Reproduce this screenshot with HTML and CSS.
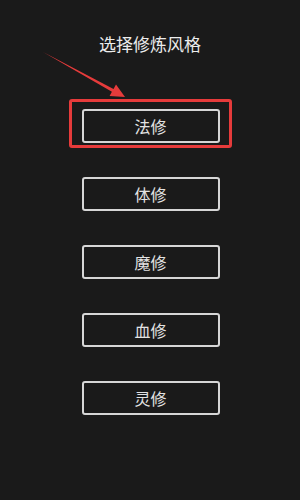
FILE: index.html
```html
<!DOCTYPE html>
<html lang="zh-CN">
<head>
  <meta charset="UTF-8" />
  <meta name="viewport" content="width=device-width, initial-scale=1.0"/>
  <title>选择修炼风格</title>
  <link rel="stylesheet" href="styles.css">
</head>
<body>

  <h1 class="title">选择修炼风格</h1>

  <!-- Style Options -->
  <div class="options">
    <div class="option-wrap">
      <button class="option-btn">法修</button>
      <span class="highlight"></span>
    </div>
    <button class="option-btn">体修</button>
    <button class="option-btn">魔修</button>
    <button class="option-btn">血修</button>
    <button class="option-btn">灵修</button>
  </div>

  <!-- Pointer annotation -->
  <svg class="pointer" width="300" height="120" viewBox="0 0 300 120">
    <polygon points="43,52 111.9,91.8 109.6,96 125,97 116,84.6 113.5,88.9" fill="#e63b3b"/>
  </svg>

</body>
</html>
```

FILE: styles.css
```css
* {
  box-sizing: border-box;
  margin: 0;
  padding: 0;
}

body {
  font-family: "Noto Sans CJK SC", "Noto Sans", sans-serif;
  background: #1a1a1a;
  color: #e6e6e6;
  width: 300px;
  height: 500px;
  position: relative;
  overflow: hidden;
}

.title {
  padding-top: 32px;
  font-size: 17px;
  line-height: 24px;
  font-weight: 400;
  text-align: center;
  color: #ececec;
}

.options {
  margin-top: 53px;
  display: flex;
  flex-direction: column;
  align-items: center;
  gap: 34px;
  padding-left: 1px;
}

.option-wrap {
  position: relative;
}

.option-btn {
  display: block;
  width: 138px;
  height: 34px;
  background: #1a1a1a;
  border: 2px solid #d6d6d6;
  border-radius: 3px;
  color: #e2e2e2;
  font-family: inherit;
  font-size: 16px;
  font-weight: 400;
  line-height: 30px;
  cursor: pointer;
}

.highlight {
  position: absolute;
  top: -10px;
  left: -13px;
  right: -12px;
  bottom: -5px;
  border: 3px solid #e63b3b;
  border-radius: 3px;
  pointer-events: none;
}

.pointer {
  position: absolute;
  top: 0;
  left: 0;
  pointer-events: none;
}
```
